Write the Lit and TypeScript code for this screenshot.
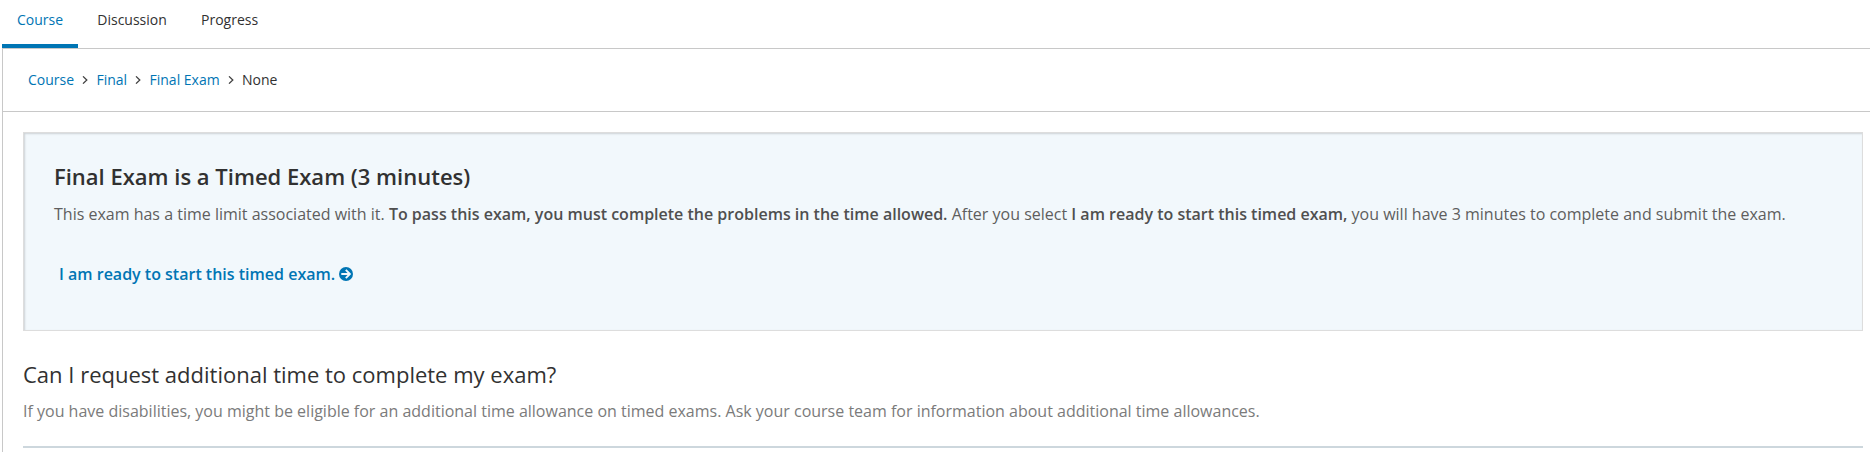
import { LitElement, html, css } from "lit";
import { customElement } from "lit/decorators.js";

@customElement("app-root")
export class AppRoot extends LitElement {
  static styles = css`
    :host { display: block; height: 452px; overflow: hidden; background: #fff; font-family: "Open Sans", sans-serif; color: #313131; }
    * { box-sizing: border-box; }
    a { color: #0075b4; text-decoration: none; }
    .tabs { display: flex; height: 48px; padding-left: 2px; }
    .tab { height: 48px; padding: 10px 15px 0; margin-right: 4.2px; font-size: 14px; line-height: 20px; color: #313131; }
    .tab.active { color: #0075b4; border-bottom: 4px solid #0075b4; }
    .page { margin-left: 2px; border: 1px solid #c8c8c8; border-width: 1px 0 0 1px; height: 404px; }
    .crumbs { display: flex; align-items: center; height: 63px; padding: 0 0 2px 25px; font-size: 14px; border-bottom: 1px solid #c8c8c8; }
    .chev { width: 6px; height: 8px; margin: 2px 8.2px 0; fill: none; stroke: #414141; stroke-width: 1.3; }
    .body { padding: 20px 7px 0 20px; }
    .exam { height: 199px; padding: 30px; background: #f2f8fc; border: 1px solid #ddd; box-shadow: inset 1px 1px 2px rgba(0, 0, 0, 0.15); }
    h3 { margin: -1px 0 0; font-size: 22px; line-height: 28px; font-weight: 600; }
    p { margin: 12px 0 0; font-size: 16px; line-height: 24px; color: #5e5e5e; }
    b { font-weight: 600; color: #4f4f4f; }
    .start { display: flex; align-items: center; margin: 36px 0 0 5px; font-size: 16px; line-height: 24px; font-weight: 600; }
    .arrow { width: 14px; height: 14px; margin-left: 4px; }
    h2 { margin: 28px 0 0; font-size: 22px; line-height: 30px; font-weight: 400; }
    .note { margin-top: 10px; color: #7b7b7b; }
    .rule { border-top: 2px solid #cdd7dd; margin-top: 23px; }
  `;
  render() {
    const chev = html`<svg class="chev" viewBox="0 0 6 8"><path d="M1 .4 4.8 4 1 7.6"/></svg>`;
    return html`
      <nav class="tabs"><a class="tab active">Course</a><a class="tab">Discussion</a><a class="tab">Progress</a></nav>
      <main class="page">
        <div class="crumbs"><a>Course</a>${chev}<a>Final</a>${chev}<a>Final Exam</a>${chev}<span>None</span></div>
        <div class="body">
          <section class="exam">
            <h3>Final Exam is a Timed Exam (3 minutes)</h3>
            <p>This exam has a time limit associated with it. <b>To pass this exam, you must complete the problems in the time allowed.</b> After you select <b>I am ready to start this timed exam,</b> you will have 3 minutes to complete and submit the exam.</p>
            <a class="start">I am ready to start this timed exam.<svg class="arrow" viewBox="0 0 14 14"><circle cx="7" cy="7" r="7" fill="#0075b4"/><path d="M2.3 7H10.6M6.8 2.9 10.9 7 6.8 11.1" fill="none" stroke="#f2f8fc" stroke-width="1.9"/></svg></a>
          </section>
          <h2>Can I request additional time to complete my exam?</h2>
          <p class="note">If you have disabilities, you might be eligible for an additional time allowance on timed exams. Ask your course team for information about additional time allowances.</p>
          <div class="rule"></div>
        </div>
      </main>`;
  }
}
